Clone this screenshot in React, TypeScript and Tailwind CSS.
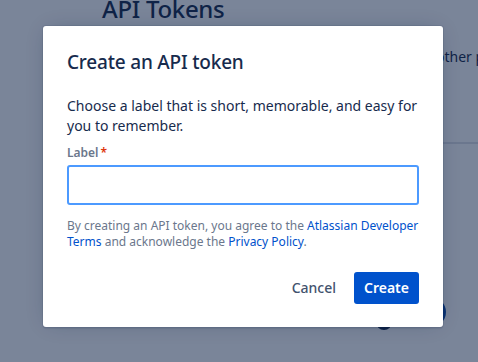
import React from 'react';

export default function App() {
  return (
    <div
      className="relative w-[478px] h-[362px] overflow-hidden bg-white text-[#172b4d]"
      style={{ fontFamily: '"Noto Sans", "Open Sans", sans-serif' }}
    >
      {/* page behind the dialog */}
      <div className="absolute left-[102px] top-[-5px] text-[24px] font-medium leading-7 tracking-[-0.3px]">API Tokens</div>
      <div className="absolute left-[436px] top-[47px] text-sm whitespace-nowrap">other platforms.</div>
      <div className="absolute left-[100px] right-0 top-[142px] border-t-2 border-[#dfe1e6]" />
      <div className="absolute left-[416px] top-[297px] w-[30px] h-[30px] rounded-full bg-[#0747a6]" />
      <div className="absolute left-[376px] top-[314px] w-[16px] h-[16px] rounded-full bg-[#172b4d]" />
      <div className="absolute left-[300px] top-[359px] text-sm whitespace-nowrap">Revoke all</div>

      {/* blanket */}
      <div className="absolute inset-0 bg-[rgba(9,30,66,0.54)]" />

      {/* dialog */}
      <div className="absolute left-[43px] top-[26px] w-[400px] bg-white rounded-[3px] shadow-[0_0_0_1px_rgba(9,30,66,0.08),0_2px_1px_rgba(9,30,66,0.08),0_0_20px_-6px_rgba(9,30,66,0.31)] flex flex-col">
        <div className="px-6 pt-6 pb-[22px]">
          <h1 className="text-[19px] font-medium leading-6 tracking-[-0.2px]">Create an API token</h1>
        </div>
        <div className="px-6 flex flex-col">
          <p className="text-sm leading-5">Choose a label that is short, memorable, and easy for you to remember.</p>
          <label className="mt-[9px] text-xs font-semibold leading-4 text-[#6b778c]">
            Label<span className="ml-[2px] text-[#de350b]">*</span>
          </label>
          <div className="mt-[4px] h-[40px] rounded-[3px] border-2 border-[#4c9aff] bg-white" />
          <p className="mt-[13px] text-xs leading-4 text-[#6b778c]">
            By creating an API token, you agree to the <span className="text-[#0052cc]">Atlassian Developer Terms</span> and acknowledge the <span className="text-[#0052cc]">Privacy Policy</span>.
          </p>
        </div>
        <div className="px-6 pt-[22px] pb-[23px] flex justify-end items-center gap-[6px]">
          <button className="h-8 px-3 text-sm font-medium text-[#42526e]">Cancel</button>
          <button className="h-8 px-[10px] rounded-[3px] bg-[#0052cc] text-sm font-semibold text-white">Create</button>
        </div>
      </div>
    </div>
  );
}
